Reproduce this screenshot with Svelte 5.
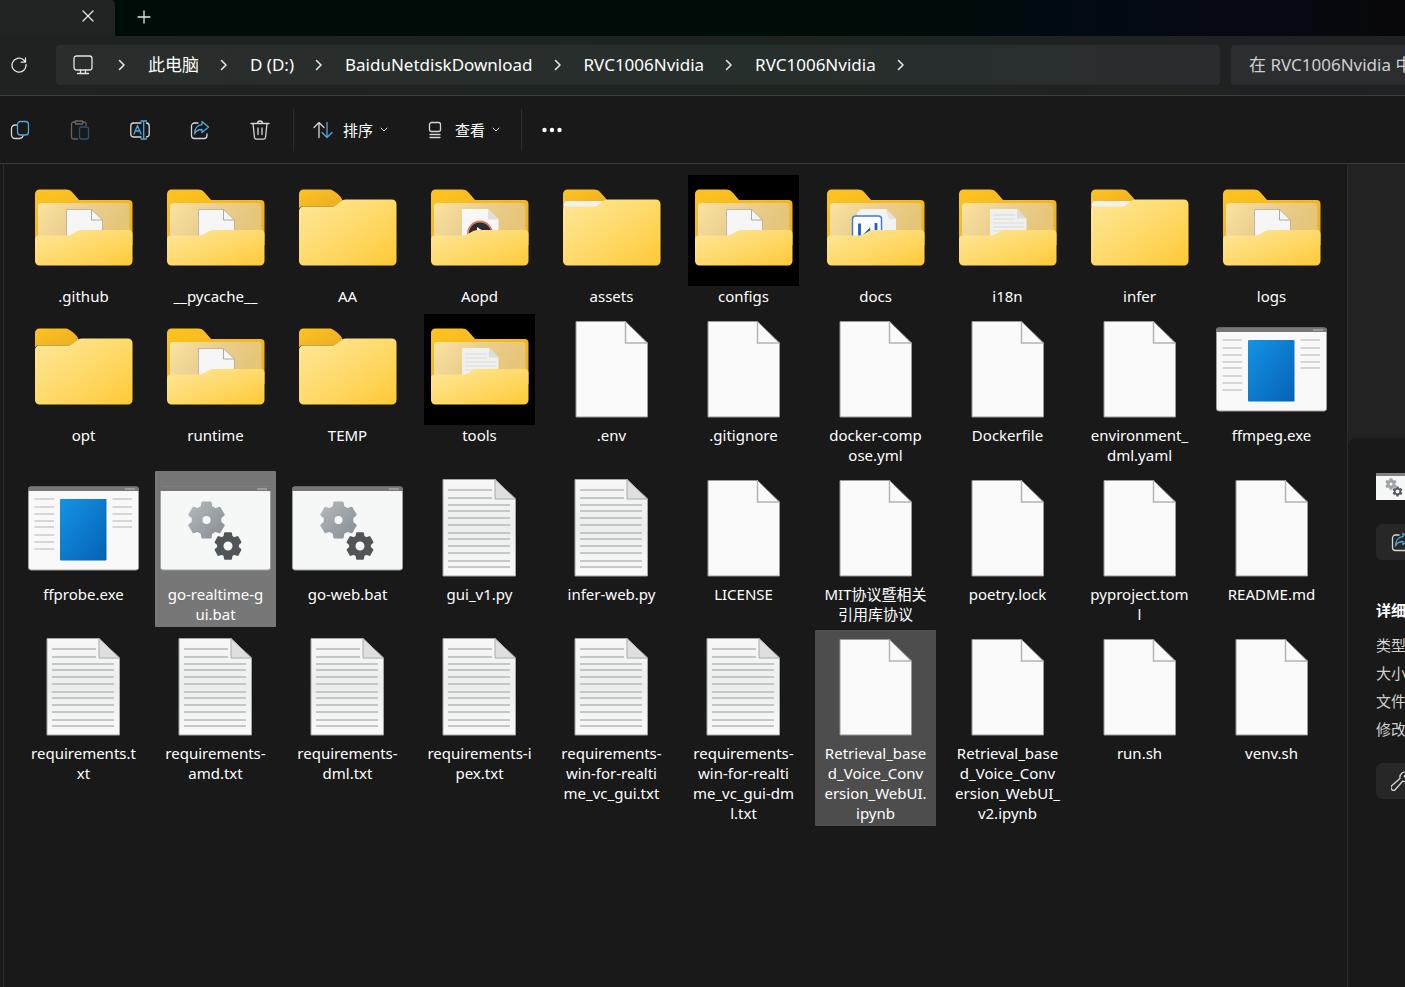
<script>
  // --- Folder contents ---
  // Each name is stored as the lines it wraps to under its icon.
  const files = [
    { icon: 'open', inside: 'blank', lines: ['.github'] },
    { icon: 'open', inside: 'blank', lines: ['__pycache__'] },
    { icon: 'closed', lines: ['AA'] },
    { icon: 'open', inside: 'media', lines: ['Aopd'] },
    { icon: 'full', lines: ['assets'] },
    { icon: 'open', inside: 'blank', dark: true, lines: ['configs'] },
    { icon: 'open', inside: 'word', lines: ['docs'] },
    { icon: 'open', inside: 'text', lines: ['i18n'] },
    { icon: 'full', lines: ['infer'] },
    { icon: 'open', inside: 'blank', lines: ['logs'] },
    { icon: 'closed', lines: ['opt'] },
    { icon: 'open', inside: 'blank', lines: ['runtime'] },
    { icon: 'closed', lines: ['TEMP'] },
    { icon: 'open', inside: 'text', dark: true, lines: ['tools'] },
    { icon: 'file', lines: ['.env'] },
    { icon: 'file', lines: ['.gitignore'] },
    { icon: 'file', lines: ['docker-comp', 'ose.yml'] },
    { icon: 'file', lines: ['Dockerfile'] },
    { icon: 'file', lines: ['environment_', 'dml.yaml'] },
    { icon: 'exe', lines: ['ffmpeg.exe'] },
    { icon: 'exe', lines: ['ffprobe.exe'] },
    { icon: 'bat', lines: ['go-realtime-g', 'ui.bat'] },
    { icon: 'bat', lines: ['go-web.bat'] },
    { icon: 'text', lines: ['gui_v1.py'] },
    { icon: 'text', lines: ['infer-web.py'] },
    { icon: 'file', lines: ['LICENSE'] },
    { icon: 'file', lines: ['MIT协议暨相关', '引用库协议'] },
    { icon: 'file', lines: ['poetry.lock'] },
    { icon: 'file', lines: ['pyproject.tom', 'l'] },
    { icon: 'file', lines: ['README.md'] },
    { icon: 'text', lines: ['requirements.t', 'xt'] },
    { icon: 'text', lines: ['requirements-', 'amd.txt'] },
    { icon: 'text', lines: ['requirements-', 'dml.txt'] },
    { icon: 'text', lines: ['requirements-i', 'pex.txt'] },
    { icon: 'text', lines: ['requirements-', 'win-for-realti', 'me_vc_gui.txt'] },
    { icon: 'text', lines: ['requirements-', 'win-for-realti', 'me_vc_gui-dm', 'l.txt'] },
    { icon: 'file', hover: true, lines: ['Retrieval_base', 'd_Voice_Conv', 'ersion_WebUI.', 'ipynb'] },
    { icon: 'file', lines: ['Retrieval_base', 'd_Voice_Conv', 'ersion_WebUI_', 'v2.ipynb'] },
    { icon: 'file', lines: ['run.sh'] },
    { icon: 'file', lines: ['venv.sh'] },
  ];

  const crumbs = ['此电脑', 'D (D:)', 'BaiduNetdiskDownload', 'RVC1006Nvidia', 'RVC1006Nvidia'];
  const details = ['类型', '大小', '文件', '修改'];

  // y positions of the ruled lines
  const textLines = [17, 25, 32, 38, 45, 52, 60, 66, 73, 80, 88, 94];
  const exeLines = [26, 34, 41, 48, 54, 62, 69, 76];

  let selected = $state(21);

  // Six-toothed gear with a round hole, drawn with the evenodd rule
  function gear(cx, cy, outer, inner, hole) {
    const points = [];
    for (let i = 0; i < 6; i++) {
      const mid = (i * 60 - 90) * (Math.PI / 180);
      for (const [offset, r] of [[-0.36, inner], [-0.23, outer], [0.23, outer], [0.36, inner]]) {
        const a = mid + offset;
        points.push(`${(cx + r * Math.cos(a)).toFixed(1)} ${(cy + r * Math.sin(a)).toFixed(1)}`);
      }
    }
    return `M${points.join('L')}Z M${cx - hole} ${cy}a${hole} ${hole} 0 1 0 ${hole * 2} 0a${hole} ${hole} 0 1 0 ${-hole * 2} 0Z`;
  }
</script>

{#snippet share()}
  <svg class="icon" viewBox="0 0 20 20">
    <path d="M8 3H4.500A3 3 0 0 0 1.500 6v9.500a3 3 0 0 0 3 3H14a3 3 0 0 0 3-3V14" />
    <path class="blue" d="M12 1.500l6.500 5.500-6.500 5.500V9.500C8.500 9.500 6 10.500 4.500 14 4.500 8.500 7.500 5 12 4.700z" />
  </svg>
{/snippet}

{#snippet chevron()}
  <svg class="chevron" viewBox="0 0 8 12"><path d="M1.500 1.500L6 6l-4.500 4.500" /></svg>
{/snippet}

{#snippet caret()}
  <svg class="caret" viewBox="0 0 8 6"><path d="M1 1l3 3 3-3" /></svg>
{/snippet}

{#snippet gears()}
  <path d={gear(46.5, 47, 18, 14, 5)} fill="url(#gearLight)" stroke="url(#gearLight)" stroke-width="2" stroke-linejoin="round" fill-rule="evenodd" />
  <path d={gear(68, 73, 13, 10, 5.5)} fill="#505558" stroke="#505558" stroke-width="2" stroke-linejoin="round" fill-rule="evenodd" />
{/snippet}

{#snippet fileIcon(file)}
  <svg class="art" class:dark={file.dark} viewBox="0 0 111 111" aria-hidden="true">
    {#if file.icon === 'open'}
      <path d="M7 19a4.500 4.500 0 0 1 4.500-4.500H38c3 0 5 1 7 3.500l6 7h49.500a4 4 0 0 1 4 4V70H7z" fill="url(#amber)" />
      <path d="M10 31a3 3 0 0 1 3-3h85.500a3 3 0 0 1 3 3v32H10z" fill="url(#lining)" />
      {#if file.inside === 'blank'}
        <path d="M38.500 34.500H63.500L74.500 45V64h-36z" fill="#f6f6f6" stroke="#aaa39a" stroke-width="0.7" />
        <path d="M63.500 34.500V45h11" fill="none" stroke="#9b978f" stroke-width="0.8" />
      {:else if file.inside === 'text'}
        <path d="M38 34H65L74.500 43.500V64H38z" fill="#f0f0ef" />
        <path d="M65 34v9.500h9.500z" fill="#dcdcdb" />
        <path d="M41 40h22M41 44h22M41 48h31M41 52h31M41 56h31" stroke="#dadada" stroke-width="1" />
      {:else if file.inside === 'media'}
        <path d="M38 34H64L74.500 44.500V64H38z" fill="#f7f7f7" />
        <path d="M64 34v10.500h10.500z" fill="#dedede" />
        <circle cx="56" cy="58.500" r="12" fill="#2c2c31" stroke="#dd7c5e" stroke-width="1.800" />
        <path d="M53 52l6 4-6 4z" fill="#fff" />
      {:else}
        <path d="M41 34H66l10 10v20H37V38z" fill="#f2f2f2" />
        <path d="M66 34l10 10h-7z" fill="#e1e1e1" />
        <rect x="32.500" y="41" width="29" height="29" rx="3" fill="#fff" stroke="#3d7dd8" stroke-width="1.500" />
        <path d="M39.500 48.500v17l9.500-10 .5 5M56 48v10" fill="none" stroke="#1c5fc6" stroke-width="2.800" />
      {/if}
      <path d="M7 64a4 4 0 0 1 4-3.500h28c5 0 9-5.500 15-5.500h46.500a4 4 0 0 1 4 4V86a4.500 4.500 0 0 1-4.500 4.500H11.500A4.500 4.500 0 0 1 7 86z" fill="url(#front)" />
    {:else if file.icon === 'closed'}
      <path d="M7 19a4.500 4.500 0 0 1 4.500-4.500H38c3 0 12 7 12.500 11-3 4-6.500 6-10.500 6H11a4 4 0 0 0-4 2z" fill="url(#amber)" />
      <path d="M7 36a4.500 4.500 0 0 1 4.500-4.500H40c6 0 8-7 14-7h46a4.500 4.500 0 0 1 4.500 4.500v57a4.500 4.500 0 0 1-4.500 4.500H11.500A4.500 4.500 0 0 1 7 86z" fill="url(#front)" />
    {:else if file.icon === 'full'}
      <path d="M7 19a4.500 4.500 0 0 1 4.500-4.500H38c3 0 5 1 7 3.500l7 8V40H7z" fill="url(#amber)" />
      <path d="M8 29a3 3 0 0 1 3-3h39v9H8z" fill="#f4f1ea" />
      <path d="M7 36a4 4 0 0 1 4-4.500h27c5 0 8-7 14-7h48a4.500 4.500 0 0 1 4.500 4.500v57a4.500 4.500 0 0 1-4.500 4.500H11.500A4.500 4.500 0 0 1 7 86z" fill="url(#front)" />
    {:else if file.icon === 'file'}
      <path d="M20 7.500H69.500L91.500 29V103H20z" fill="#fafafa" stroke="#999" stroke-width="1" />
      <path d="M69.500 7.500V29h22" fill="none" stroke="#b4b4b4" stroke-width="1.500" />
    {:else if file.icon === 'text'}
      <path d="M19 6.500H71L91.500 26V103H19z" fill="url(#paper)" stroke="#a5a5a5" stroke-width="1" />
      <path d="M71 6.500V26h20.500z" fill="#dedfdf" stroke="#aaa" stroke-width="1" />
      {#each textLines as y, i}
        <path d="M24 {y}H{i < 2 ? 68 : 86}" stroke="#b6b8b8" stroke-width="1.600" />
      {/each}
    {:else}
      <rect x="0.500" y="14" width="110" height="83" rx="2.500" fill={file.icon === 'exe' ? '#f9f9f9' : '#f6f7f7'} stroke="#a0a0a0" stroke-width="1" />
      <path d="M0 18v-2a2.500 2.500 0 0 1 2.500-2.500h106A2.500 2.500 0 0 1 111 16v2z" fill="#777575" />
      <path d="M97 16h10" stroke="#a8a8a8" stroke-width="1.500" />
      {#if file.icon === 'exe'}
        {#each exeLines as y, i}
          <path d="M6.500 {y}H26" stroke="#cacaca" stroke-width="1.500" />
          {#if i < 5}<path d="M84.500 {y}H104" stroke="#cacaca" stroke-width="1.500" />{/if}
        {/each}
        <rect x="32" y="26" width="46.500" height="61.500" rx="1" fill="url(#blue)" />
      {:else}
        {@render gears()}
      {/if}
    {/if}
  </svg>
{/snippet}

<!-- Gradients shared by the file icons -->
<svg class="defs" width="0" height="0" aria-hidden="true">
  <defs>
    <linearGradient id="amber" x1="0" y1="0" x2="1" y2="1"><stop offset="0" stop-color="#ffc31f" /><stop offset="1" stop-color="#e9ac25" /></linearGradient>
    <linearGradient id="lining" x1="0" y1="0" x2="1" y2="0.300"><stop offset="0" stop-color="#fbe3a0" /><stop offset="0.500" stop-color="#ebcf90" /><stop offset="1" stop-color="#e5c578" /></linearGradient>
    <linearGradient id="front" x1="0" y1="0" x2="1" y2="1"><stop offset="0" stop-color="#ffe79a" /><stop offset="0.500" stop-color="#ffda6b" /><stop offset="1" stop-color="#ffc936" /></linearGradient>
    <linearGradient id="paper" x1="0" y1="0" x2="0" y2="1"><stop offset="0" stop-color="#f7f7f7" /><stop offset="0.500" stop-color="#eceeee" /><stop offset="1" stop-color="#f9f9f9" /></linearGradient>
    <linearGradient id="blue" x1="0" y1="0" x2="1" y2="1"><stop offset="0" stop-color="#1593e4" /><stop offset="1" stop-color="#0562b4" /></linearGradient>
    <linearGradient id="gearLight" x1="0" y1="0" x2="1" y2="1"><stop offset="0" stop-color="#b3b9bd" /><stop offset="1" stop-color="#878e93" /></linearGradient>
  </defs>
</svg>

<div class="window">
  <header class="tabs">
    <div class="tab">
      <button class="plain" aria-label="关闭"><svg class="glyph" viewBox="0 0 14 14"><path d="M2 2l10 10M12 2L2 12" /></svg></button>
    </div>
    <button class="plain add" aria-label="新建"><svg class="glyph" viewBox="0 0 14 14"><path d="M7 1v12M1 7h12" /></svg></button>
  </header>

  <div class="location">
    <button class="plain refresh" aria-label="刷新">
      <svg class="glyph" viewBox="0 0 16 16"><path d="M15 7.500a7 7 0 1 1-2.500-4.700l2 2M14.500 1v4.200h-4.200" /></svg>
    </button>
    <nav class="address">
      <svg class="monitor" viewBox="0 0 20 20">
        <rect x="1" y="1" width="18" height="14" rx="2.500" />
        <path d="M7.500 15v3M12.500 15v3M4.500 18.500h11" />
      </svg>
      {@render chevron()}
      {#each crumbs as crumb}
        <button class="plain crumb">{crumb}</button>
        {@render chevron()}
      {/each}
    </nav>
    <input class="search" type="text" placeholder="在 RVC1006Nvidia 中" aria-label="搜索" />
  </div>

  <div class="toolbar">
    <div class="tools">
      <button class="plain" aria-label="复制">
        <svg class="icon" viewBox="0 0 20 20">
          <path d="M6.500 5H5a3.500 3.500 0 0 0-3.500 3.500V15A3.500 3.500 0 0 0 5 18.500h4.500A3.500 3.500 0 0 0 13 15.500" />
          <rect class="blue" x="7.500" y="1.500" width="11" height="13.500" rx="3" />
        </svg>
      </button>
      <button class="plain off" aria-label="粘贴" disabled>
        <svg class="icon" viewBox="0 0 20 20">
          <path d="M7.500 19H3.500a2 2 0 0 1-2-2V4a2 2 0 0 1 2-2H5M12.500 2H14a2 2 0 0 1 2 2v1.500M5.500 1h7v3h-7z" />
          <rect class="blue" x="9.500" y="7" width="9" height="12" rx="2" />
        </svg>
      </button>
      <button class="plain" aria-label="重命名">
        <svg class="icon" viewBox="0 0 20 20">
          <path d="M11 3H3.500A3 3 0 0 0 .8 6v8a3 3 0 0 0 2.700 3H11M16.500 3a3 3 0 0 1 2.700 3v8a3 3 0 0 1-2.700 3" />
          <path class="blue" d="M13.700 1v18M11 1h5.500M11 19h5.500M4 14l3.500-8.500L11 14M5.200 11h4.600" />
        </svg>
      </button>
      <button class="plain" aria-label="共享">{@render share()}</button>
      <button class="plain" aria-label="删除">
        <svg class="icon" viewBox="0 0 20 20">
          <path d="M1 3.500h18M7.500 3.500a2.500 2.500 0 0 1 5 0M3 3.500l1.500 14a2 2 0 0 0 2 1.700h7a2 2 0 0 0 2-1.700L17 3.500M8 8v6.500M12 8v6.500" />
        </svg>
      </button>
    </div>
    <div class="menus">
      <button class="plain menu">
        <svg class="icon" viewBox="0 0 20 20">
          <path d="M6 17.500V2.500M1 7.500l5-5 5 5" />
          <path class="blue" d="M14 2.500v15M9 12.500l5 5 5-5" />
        </svg>
        <span>排序</span>
        {@render caret()}
      </button>
      <button class="plain menu">
        <svg class="icon" viewBox="0 0 20 20">
          <rect x="4.500" y="2.500" width="11" height="9" rx="2" />
          <path d="M5 14.500h10M5 17.500h10" />
        </svg>
        <span>查看</span>
        {@render caret()}
      </button>
    </div>
    <button class="plain more" aria-label="更多">
      <svg viewBox="0 0 20 6"><circle cx="2.500" cy="3" r="2.200" /><circle cx="10" cy="3" r="2.200" /><circle cx="17.500" cy="3" r="2.200" /></svg>
    </button>
  </div>

  <div class="body">
    <main class="files">
      {#each files as file, i}
        <button
          class="plain item"
          class:selected={i === selected}
          class:hover={file.hover}
          onclick={() => (selected = i)}
        >
          {@render fileIcon(file)}
          <span class="name">
            {#each file.lines as line}
              <span class="line">{line}</span>
            {/each}
          </span>
        </button>
      {/each}
    </main>

    <aside class="side">
      <div class="card">
        <svg class="thumb" viewBox="0 0 36 27">
          <path d="M0 0h36v27H0z" fill="#f6f7f7" />
          <path d="M0 0h36v3H0z" fill="#848084" />
          <path d={gear(15, 11, 6, 4.5, 1.5)} fill="#a0a4a7" fill-rule="evenodd" />
          <path d={gear(21.5, 18.5, 5, 3.8, 2)} fill="#505558" fill-rule="evenodd" />
        </svg>
        <button class="plain action" aria-label="共享">{@render share()}</button>
        <h2>详细</h2>
        <ul>
          {#each details as detail}
            <li>{detail}</li>
          {/each}
        </ul>
        <button class="plain action" aria-label="属性">
          <svg class="icon" viewBox="0 0 20 20">
            <path d="M17 1.500l-3.700 3.700 1.500 1.500 4-3.700a5.600 5.600 0 0 1-7.200 7.200l-7.200 8.300a2.600 2.600 0 0 1-3.700-3.700l8.300-7.200A5.600 5.600 0 0 1 17 1.500z" />
          </svg>
        </button>
      </div>
    </aside>
  </div>
</div>

<style>
  :global(body) {
    margin: 0;
    background: #191919;
    overflow: hidden;
  }

  .window {
    display: flex;
    flex-direction: column;
    min-height: 100vh;
    overflow: hidden;
    color: #fff;
    font: 15px/20px 'Noto Sans', 'Noto Sans CJK SC', sans-serif;
  }

  .defs {
    position: absolute;
  }

  .plain {
    display: flex;
    align-items: center;
    justify-content: center;
    padding: 0;
    border: 0;
    background: none;
    color: inherit;
    font: inherit;
  }

  svg {
    flex: none;
    display: block;
    fill: none;
  }

  .glyph,
  .monitor,
  .chevron,
  .caret,
  .icon {
    stroke: #e4e4e4;
    stroke-width: 1.3;
    stroke-linecap: round;
    stroke-linejoin: round;
  }

  .icon {
    width: 20px;
    height: 20px;
    stroke: #d6d6d6;
  }

  .blue {
    stroke: #4fa9dc;
  }

  /* --- Tab strip --- */
  .tabs {
    display: flex;
    height: 36px;
    background: linear-gradient(90deg, #000c07 0 60%, #000b10 75%, #060913 87%, #08080b);
  }

  .tab {
    display: flex;
    align-items: center;
    justify-content: flex-end;
    width: 95px;
    padding: 0 20px 4px 0;
    background: #1f2322;
    border-radius: 0 4px 0 0;
  }

  .tabs .glyph {
    width: 14px;
    height: 14px;
  }

  .add {
    width: 58px;
    padding-bottom: 2px;
  }

  /* --- Address row --- */
  .location {
    display: flex;
    align-items: center;
    height: 57px;
    padding-bottom: 2px;
    border-bottom: 1px solid #3d3f3e;
    background: linear-gradient(90deg, #1e2220, #1d2420 60%, #1f2122);
    font-size: 17px;
  }

  .refresh {
    width: 38px;
    margin-right: 18px;
  }

  .refresh .glyph {
    width: 16px;
    height: 16px;
  }

  .address {
    display: flex;
    flex: 1;
    align-items: center;
    height: 40px;
    padding-left: 17px;
    border-radius: 4px;
    background: linear-gradient(90deg, #292d2c, #272f2c 60%, #2a2d2f);
  }

  .monitor {
    width: 20px;
    height: 20px;
    margin-right: 4px;
  }

  .chevron {
    width: 8px;
    height: 12px;
    padding: 0 22px 0 21px;
    stroke-width: 1.6;
  }

  .crumb {
    white-space: nowrap;
  }

  .search {
    width: 174px;
    height: 40px;
    margin-left: 11px;
    padding: 0 0 0 18px;
    box-sizing: border-box;
    border: 0;
    border-radius: 4px 0 0 4px;
    background: #2c2d2f;
    color: #d0d0d0;
    font: inherit;
  }

  .search::placeholder {
    color: #d0d0d0;
    opacity: 1;
  }

  /* --- Command bar --- */
  .toolbar {
    display: flex;
    align-items: center;
    height: 67px;
    border-bottom: 1px solid #3a3a3a;
  }

  .tools {
    display: flex;
    gap: 20px;
    padding-right: 13px;
  }

  .tools button {
    width: 40px;
    height: 40px;
  }

  .off {
    opacity: 0.4;
  }

  .menus {
    display: flex;
    gap: 37px;
    height: 42px;
    padding: 0 21px 0 19px;
    border: solid #2d2d2d;
    border-width: 0 1px;
  }

  .menu span {
    margin: 0 7px 0 10px;
  }

  .caret {
    width: 8px;
    height: 6px;
    stroke-width: 1;
  }

  .more {
    width: 60px;
    height: 40px;
  }

  .more svg {
    width: 20px;
    height: 6px;
    fill: #fff;
  }

  /* --- File grid --- */
  .body {
    display: flex;
    flex: 1;
  }

  .files {
    display: grid;
    flex: 1;
    grid-template-columns: repeat(auto-fill, 121px);
    gap: 3px 11px;
    align-content: start;
    align-items: start;
    padding: 9px 0 9px 19px;
    border: solid #2b2b2b;
    border-width: 0 1px;
    margin-left: 3px;
  }

  .item {
    flex-direction: column;
    padding: 2px 0 3px;
    border-radius: 1px;
  }

  .hover {
    background: #4d4d4d;
  }

  .selected {
    background: #777;
  }

  .art {
    width: 111px;
    height: 111px;
  }

  .dark {
    background: #000;
  }

  .line {
    display: block;
    white-space: nowrap;
  }

  /* --- Details pane --- */
  .side {
    width: 57px;
    padding-top: 274px;
    overflow: hidden;
    background: #222;
  }

  .card {
    min-height: 100%;
    padding: 35px 0 0 28px;
    border-radius: 8px 0 0 0;
    background: #191919;
    white-space: nowrap;
  }

  .thumb {
    width: 36px;
    height: 27px;
  }

  .action {
    width: 50px;
    height: 36px;
    margin-top: 24px;
    border-radius: 6px;
    background: #272727;
  }

  h2 {
    margin: 40px 0 11px;
    font-size: 15px;
    line-height: 20px;
  }

  ul {
    margin: 0;
    padding: 0;
    list-style: none;
    color: #d0d0d0;
    line-height: 28px;
  }

  ul + .action {
    margin-top: 20px;
  }
</style>
